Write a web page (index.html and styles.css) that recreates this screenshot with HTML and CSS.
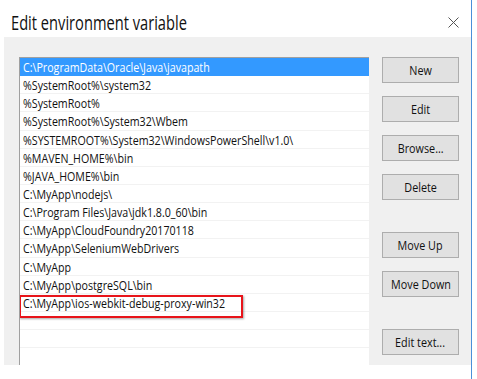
FILE: index.html
```html
<!DOCTYPE html>
<html>
<head>
<meta charset="utf-8">
<link rel="stylesheet" href="styles.css">
</head>
<body>
<div class="window">
  <div class="titlebar">
    <span class="title">Edit environment variable</span>
    <svg class="close" width="11" height="11" viewBox="0 0 11 11"><path d="M0.5 0.5 L10.5 10.5 M10.5 0.5 L0.5 10.5" stroke="#555" stroke-width="1" fill="none"/></svg>
  </div>
  <div class="panel">
    <div class="list">
      <div class="row selected"><span class="txt">C:\ProgramData\Oracle\Java\javapath</span></div>
      <div class="row"><span class="txt">%SystemRoot%\system32</span></div>
      <div class="row"><span class="txt">%SystemRoot%</span></div>
      <div class="row"><span class="txt">%SystemRoot%\System32\Wbem</span></div>
      <div class="row"><span class="txt">%SYSTEMROOT%\System32\WindowsPowerShell\v1.0\</span></div>
      <div class="row"><span class="txt">%MAVEN_HOME%\bin</span></div>
      <div class="row"><span class="txt">%JAVA_HOME%\bin</span></div>
      <div class="row"><span class="txt">C:\MyApp\nodejs\</span></div>
      <div class="row"><span class="txt">C:\Program Files\Java\jdk1.8.0_60\bin</span></div>
      <div class="row"><span class="txt">C:\MyApp\CloudFoundry20170118</span></div>
      <div class="row"><span class="txt">C:\MyApp\SeleniumWebDrivers</span></div>
      <div class="row"><span class="txt">C:\MyApp</span></div>
      <div class="row"><span class="txt">C:\MyApp\postgreSQL\bin</span></div>
      <div class="row marked"><span class="mark"></span><span class="txt">C:\MyApp\ios-webkit-debug-proxy-win32</span></div>
      <div class="row"></div>
      <div class="row"></div>
      <div class="row"></div>
    </div>
    <div class="buttons">
      <div class="btn"><span class="btxt">New</span></div>
      <div class="btn"><span class="btxt">Edit</span></div>
      <div class="btn"><span class="btxt">Browse...</span></div>
      <div class="btn"><span class="btxt">Delete</span></div>
      <div class="btn group"><span class="btxt">Move Up</span></div>
      <div class="btn"><span class="btxt">Move Down</span></div>
      <div class="btn group"><span class="btxt">Edit text...</span></div>
    </div>
  </div>
</div>
</body>
</html>
```
FILE: styles.css
```css
html, body {
  margin: 0;
  padding: 0;
  background: #ffffff;
}
body {
  font-family: "Open Sans", "Noto Sans", sans-serif;
  width: 477px;
  height: 379px;
  overflow: hidden;
}
.window {
  width: 472px;
  height: 379px;
  border-right: 1px solid #4a90d9;
  box-sizing: border-box;
  background: #ffffff;
}
.titlebar {
  height: 37px;
  display: flex;
  align-items: flex-start;
  justify-content: space-between;
  padding: 12px 12px 0 11px;
  box-sizing: border-box;
}
.title {
  display: inline-block;
  font-size: 20.5px;
  line-height: 20px;
  color: #111;
  white-space: nowrap;
  transform: scaleX(0.715);
  transform-origin: left center;
}
.close {
  margin-top: 5px;
}
.panel {
  margin-left: 4px;
  height: 328px;
  background: #f0f0f0;
  box-sizing: border-box;
  padding: 20px 0 0 15px;
  display: flex;
}
.list {
  width: 350px;
  background: #ffffff;
  border-top: 1px solid #a0a0a0;
  border-left: 1px solid #a0a0a0;
  box-sizing: border-box;
  overflow: hidden;
}
.row {
  position: relative;
  height: 18.15px;
  box-sizing: border-box;
  border-bottom: 1px solid #f2f2f2;
  padding-left: 3px;
  font-size: 13px;
  line-height: 18px;
  color: #111;
  white-space: nowrap;
}
.txt {
  display: inline-block;
  transform: scaleX(0.82);
  transform-origin: left center;
}
.row.selected {
  background: #3399ff;
  color: #ffffff;
  border-bottom-color: #3399ff;
}
.mark {
  position: absolute;
  left: -1px;
  top: 1px;
  width: 224px;
  height: 23px;
  border: 2px solid #e8141a;
  box-sizing: border-box;
  box-shadow: 1px 1px 2px rgba(0,0,0,0.35);
}
.buttons {
  margin-left: 13px;
  width: 77px;
  display: flex;
  flex-direction: column;
  gap: 13px;
}
.btn {
  height: 26px;
  box-sizing: border-box;
  border: 1px solid #adadad;
  background: #e1e1e1;
  display: flex;
  align-items: center;
  justify-content: center;
  font-size: 13px;
  color: #111;
  white-space: nowrap;
}
.btxt {
  display: inline-block;
  transform: scaleX(0.83);
  transform-origin: center center;
}
.btn.group {
  margin-top: 19px;
}
```
